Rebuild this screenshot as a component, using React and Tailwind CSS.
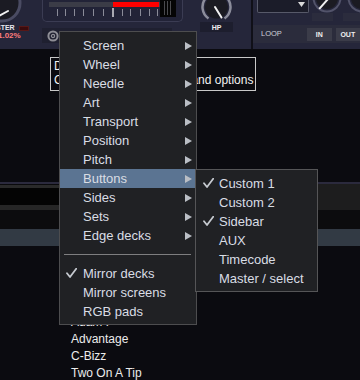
import React from "react";

const Check = () => (
  <svg width="11" height="10" viewBox="0 0 11 10" className="block">
    <path d="M1 5.2 L4 9 L10.2 0.8" fill="none" stroke="#c6cad0" strokeWidth="1.8" strokeLinecap="round" strokeLinejoin="round" />
  </svg>
);

const Arrow = () => (
  <svg width="7" height="8" viewBox="0 0 7 8" className="block">
    <polygon points="0,0 7,4 0,8" fill="#babec5" />
  </svg>
);

const mainItems = [
  "Screen", "Wheel", "Needle", "Art", "Transport", "Position", "Pitch", "Buttons", "Sides", "Sets", "Edge decks",
];

const subItems = [
  { label: "Custom 1", checked: true },
  { label: "Custom 2" },
  { label: "Sidebar", checked: true },
  { label: "AUX" },
  { label: "Timecode" },
  { label: "Master / select" },
];

const rows = ["Aphrodite", "Bad Company", "Calibre", "Dillinja", "Ed Rush", "Adam F", "Advantage", "C-Bizz", "Two On A Tip"];

export default function App() {
  return (
    <div className="relative w-[360px] h-[380px] overflow-hidden bg-[#0b0b10] font-['Liberation_Sans',Arial,sans-serif]">
      {/* top deck panel */}
      <div className="flex h-[49px] bg-[#25263a]">
        {/* master knob column */}
        <div className="w-[42px] flex flex-col overflow-hidden">
          <svg width="42" height="25" className="block">
            <circle cx="2" cy="3" r="18" fill="#1b1b23" stroke="#4a4b62" strokeWidth="3" />
            <line x1="-1" y1="16" x2="8" y2="11" stroke="#f2f2f2" strokeWidth="2" strokeLinecap="round" />
          </svg>
          <div className="flex items-center h-[6px] gap-[4px]">
            <span className="ml-[-4px] text-[7px] leading-[6px] font-bold text-[#e8e8ee]">STER</span>
            <span className="w-[10px] h-[5px] bg-[#3a0b0d] border border-[#561818]" />
          </div>
          <span className="ml-[-2px] mt-[1px] text-[8px] leading-[7px] font-bold text-[#ff7d7d] whitespace-nowrap">1.02%</span>
        </div>

        {/* pitch slider column */}
        <div className="w-[141px] flex flex-col">
          <div className="h-[22px] border border-t-0 border-[#3b3c53] rounded-b-[5px] bg-[#222337] overflow-hidden">
            <svg width="139" height="21" className="block">
              <rect x="6" y="2" width="111" height="5" fill="#3b3c47" />
              <rect x="70" y="2" width="46" height="5" fill="#ff0000" />
              <rect x="117" y="0" width="16" height="17" fill="#050505" />
              <line x1="121.5" y1="1" x2="121.5" y2="15" stroke="#4a4a4e" />
              <line x1="124.5" y1="1" x2="124.5" y2="15" stroke="#4a4a4e" />
              <line x1="127.5" y1="1" x2="127.5" y2="15" stroke="#4a4a4e" />
              {[14, 22, 31, 40, 50, 60, 79, 87, 97, 106, 114].map((x) => (
                <line key={x} x1={x + 0.5} y1="9" x2={x + 0.5} y2="16" stroke="#8a8b98" />
              ))}
              <rect x="69" y="8" width="2" height="9" fill="#a9a9b2" />
            </svg>
          </div>
          <div className="mt-[6px] h-[15px] w-[130px] bg-[#1f2030] flex items-center pl-[5px]">
            <svg width="12" height="12" className="block">
              <circle cx="6" cy="6" r="4.6" fill="none" stroke="#8e8e96" strokeWidth="2" />
              <circle cx="6" cy="6" r="1.6" fill="none" stroke="#8e8e96" strokeWidth="1.3" />
            </svg>
          </div>
        </div>

        {/* HP knob column */}
        <div className="w-[68px] flex flex-col items-start">
          <svg width="68" height="22" className="block">
            <path d="M25.5 18.5 A14 14 0 1 1 41.5 18.5" fill="none" stroke="#8c8d9b" strokeWidth="2.5" />
            <circle cx="33.5" cy="7" r="11.5" fill="#1b1b22" />
            <line x1="32" y1="7" x2="38.5" y2="17.5" stroke="#f2f2f2" strokeWidth="2" strokeLinecap="round" />
          </svg>
          <div className="ml-[17px] w-[33px] h-[10px] bg-[#1d1e2e] flex items-center justify-center">
            <span className="text-[7px] leading-[7px] font-bold text-[#eeeeee]">HP</span>
          </div>
        </div>

        <div className="w-[2px] bg-[#101018]" />

        {/* right controls */}
        <div className="flex-1 flex flex-col overflow-hidden">
          <div className="flex h-[13px]">
            <div className="ml-[4px] w-[53px] h-[13px] border border-t-0 border-[#575969] rounded-b-[2px] bg-[#1b1c29] flex items-start justify-end pr-[3px] pt-[2px]">
              <svg width="7" height="5" className="block">
                <polygon points="0,0 7,0 3.5,5" fill="#dadada" />
              </svg>
            </div>
            <svg width="52" height="13" className="block">
              <circle cx="18" cy="-2" r="13.5" fill="none" stroke="#52536a" strokeWidth="2" />
              <circle cx="18" cy="-2" r="11" fill="#1b1b22" />
              <line x1="10.7" y1="8.3" x2="19" y2="-1" stroke="#f0f0f0" strokeWidth="2" strokeLinecap="round" />
              <circle cx="53" cy="-2" r="13.5" fill="none" stroke="#52536a" strokeWidth="2" />
              <circle cx="53" cy="-2" r="11" fill="#1b1b22" />
            </svg>
          </div>
          <div className="flex h-[8px] gap-[10px] pl-[59px]">
            <div className="w-[25px] bg-[#2b2c3d]" />
            <div className="w-[20px] bg-[#2b2c3d]" />
          </div>
          <div className="mt-[4px] h-[18px] bg-[#2b2c3c] flex items-center pl-[8px]">
            <span className="w-[51px] text-[7.5px] leading-[8px] text-[#cfd0d8]">LOOP</span>
            <div className="w-[27px] h-[13px] bg-[#3b3c49] flex items-center justify-center">
              <span className="text-[7px] leading-[7px] font-bold text-[#f0f0f0]">IN</span>
            </div>
            <div className="ml-[4px] w-[27px] h-[13px] bg-[#3b3c49] flex items-center justify-center">
              <span className="text-[7px] leading-[7px] font-bold text-[#f0f0f0]">OUT</span>
            </div>
          </div>
        </div>
      </div>

      {/* dark area */}
      <div className="h-[133px]" />
      <div className="h-[2px] bg-[#2b2a3d]" />
      <div className="flex h-[26px]">
        <div className="flex-1 flex flex-col">
          <div className="h-[1px] bg-[#0a0a0c]" />
          <div className="h-[3px] bg-[#2a2a2a]" />
          <div className="h-[17px] bg-[#040404]" />
          <div className="h-[5px] bg-[#262626]" />
        </div>
        <div className="w-[60px] bg-[#1d1d1e]" />
      </div>
      <div className="h-[19px] bg-[#0c0c0e]" />
      <div className="flex flex-col">
        {rows.map((r, i) => (
          <div key={r} className={`h-[17px] pl-[71px] text-[12px] leading-[17px] text-[#ececec] ${i === 0 ? "bg-[#323a44]" : ""}`}>
            {r}
          </div>
        ))}
      </div>

      {/* tooltip */}
      <div className="absolute left-[50px] top-[57px] w-[206px] h-[34px] border border-[#c8c8c8] bg-[#0b0b10] px-[3px] pt-[1px] text-[12px] leading-[14px] text-[#f2f2f2]">
        <div className="whitespace-nowrap">Double-click to reset</div>
        <div className="flex justify-between whitespace-nowrap">
          <span>Click for the display menu</span>
          <span>and options</span>
        </div>
      </div>

      {/* main context menu */}
      <div className="absolute left-[59px] top-[31px] w-[138px] border border-[#4d4d4f] bg-[#202124] pt-[4px] pb-[3px] text-[13px] leading-[19px] text-[#d9dde4]">
        {mainItems.map((label) => (
          <div key={label} className={`h-[19px] flex items-center pl-[23px] pr-[4px] ${label === "Buttons" ? "bg-[#5b7492]" : ""}`}>
            <span className="flex-1 whitespace-nowrap">{label}</span>
            <Arrow />
          </div>
        ))}
        <div className="h-[19px] flex items-center pl-[4px] pr-[5px]">
          <div className="h-[1px] flex-1 bg-[#7e7e80]" />
        </div>
        {[
          { label: "Mirror decks", checked: true },
          { label: "Mirror screens" },
          { label: "RGB pads" },
        ].map((it) => (
          <div key={it.label} className="relative h-[19px] flex items-center pl-[23px]">
            {it.checked && (
              <span className="absolute left-[6px] top-[4px]">
                <Check />
              </span>
            )}
            <span className="whitespace-nowrap">{it.label}</span>
          </div>
        ))}
      </div>

      {/* submenu */}
      <div className="absolute left-[195px] top-[169px] w-[123px] border border-[#555557] bg-[#202124] pt-[4px] pb-[3px] text-[13px] leading-[19px] text-[#d9dde4]">
        {subItems.map((it) => (
          <div key={it.label} className="relative h-[19px] flex items-center pl-[23px]">
            {it.checked && (
              <span className="absolute left-[7px] top-[4px]">
                <Check />
              </span>
            )}
            <span className="whitespace-nowrap">{it.label}</span>
          </div>
        ))}
      </div>
    </div>
  );
}
